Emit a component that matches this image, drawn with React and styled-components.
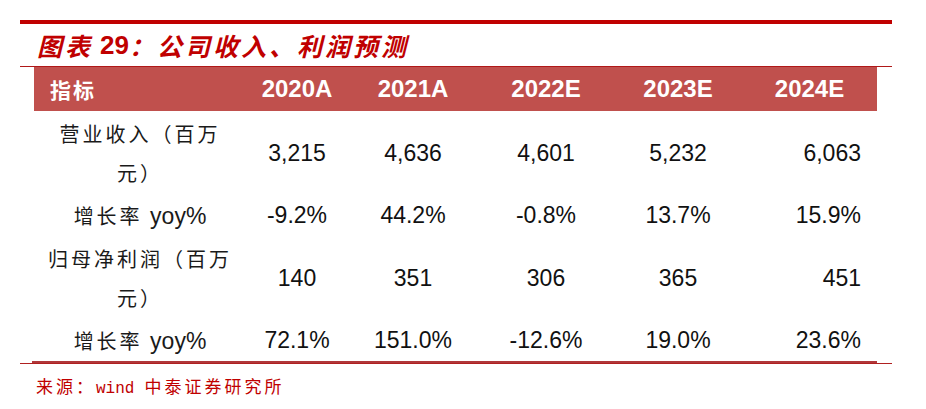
import React from 'react';
import styled, { createGlobalStyle } from 'styled-components';

const GlobalStyle = createGlobalStyle`
    body {
        margin: 0;
        background: #ffffff;
    }
`;

const cols = '212px 102px 130px 136px 128px 135px';

const Page = styled.div`
    width: 872px;
    padding: 20px 0 0 20px;
    font-family: "Liberation Sans", "Noto Sans CJK SC", sans-serif;
`;

const TopRule = styled.div`
    height: 4px;
    background: #c00000;
`;

const Title = styled.h1`
    margin: 0;
    height: 42px;
    padding-left: 17px;
    display: flex;
    align-items: center;
    font-size: 25px;
    font-weight: bold;
    font-style: italic;
    color: #c00000;
    letter-spacing: 3px;
    font-family: "Liberation Sans", "Noto Sans CJK SC", sans-serif;

    .num {
        font-size: 26px;
        font-style: normal;
        letter-spacing: 0;
        margin: 0 0 0 7px;
    }
`;

const ThinRule = styled.div`
    height: 1px;
    background: #b01818;
`;

const Table = styled.div`
    margin-left: 14px;
    width: 843px;
`;

const HeaderRow = styled.div`
    display: grid;
    grid-template-columns: ${cols};
    height: 44px;
    align-items: center;
    background: #c0504d;
    color: #ffffff;
    font-weight: bold;
`;

const HeadCell = styled.div`
    text-align: ${(p) => (p.$left ? 'left' : 'center')};
    padding-left: ${(p) => (p.$left ? '16px' : '0')};
    font-size: ${(p) => (p.$left ? '21px' : '24px')};
    letter-spacing: ${(p) => (p.$left ? '2px' : '0')};
`;

const Row = styled.div`
    display: grid;
    grid-template-columns: ${cols};
    height: ${(p) => (p.$tall ? '84px' : '41px')};
    align-items: center;
    color: #111111;
`;

const Label = styled.div`
    text-align: center;
    font-family: "Noto Sans CJK SC", sans-serif;
    font-size: 20px;
    line-height: 39px;
    letter-spacing: 3px;
    color: #1a1a1a;

    .latin {
        font-family: "Liberation Sans", sans-serif;
        font-size: 23px;
        letter-spacing: 0;
    }
`;

const Value = styled.div`
    font-size: 23px;
    text-align: ${(p) => (p.$right ? 'right' : 'center')};
    padding-right: ${(p) => (p.$right ? '16px' : '0')};
`;

const BottomThick = styled.div`
    margin-left: 12px;
    width: 845px;
    height: 2px;
    background: #b0383a;
`;

const BottomThin = styled.div`
    height: 1px;
    background: #b02020;
`;

const Source = styled.div`
    margin-top: 12px;
    padding-left: 16px;
    font-family: "Noto Sans CJK SC", sans-serif;
    font-size: 17px;
    line-height: 20px;
    letter-spacing: 3px;
    color: #c00000;

    .mono {
        font-family: "Liberation Mono", monospace;
        font-size: 16px;
        letter-spacing: 0;
        margin-right: 10px;
    }
`;

const years = ['2020A', '2021A', '2022E', '2023E', '2024E'];

const rows = [
    { label: ['营业收入（百万', '元）'], values: ['3,215', '4,636', '4,601', '5,232', '6,063'] },
    { label: null, values: ['-9.2%', '44.2%', '-0.8%', '13.7%', '15.9%'] },
    { label: ['归母净利润（百万', '元）'], values: ['140', '351', '306', '365', '451'] },
    { label: null, values: ['72.1%', '151.0%', '-12.6%', '19.0%', '23.6%'] },
];

const App = () => {
    return (
        <Page>
            <GlobalStyle />
            <TopRule />
            <Title>
                图表<span className="num">29</span>：公司收入、利润预测
            </Title>
            <ThinRule />
            <Table>
                <HeaderRow>
                    <HeadCell $left>指标</HeadCell>
                    {years.map((y) => (
                        <HeadCell key={y}>{y}</HeadCell>
                    ))}
                </HeaderRow>
                {rows.map((r, i) => (
                    <Row key={i} $tall={!!r.label}>
                        <Label>
                            {r.label ? (
                                <>
                                    {r.label[0]}
                                    <br />
                                    {r.label[1]}
                                </>
                            ) : (
                                <>
                                    增长率 <span className="latin">yoy%</span>
                                </>
                            )}
                        </Label>
                        {r.values.map((v, j) => (
                            <Value key={j} $right={j === 4}>{v}</Value>
                        ))}
                    </Row>
                ))}
            </Table>
            <BottomThick />
            <BottomThin />
            <Source>
                来源：<span className="mono">wind</span>中泰证券研究所
            </Source>
        </Page>
    );
};

export default App;
